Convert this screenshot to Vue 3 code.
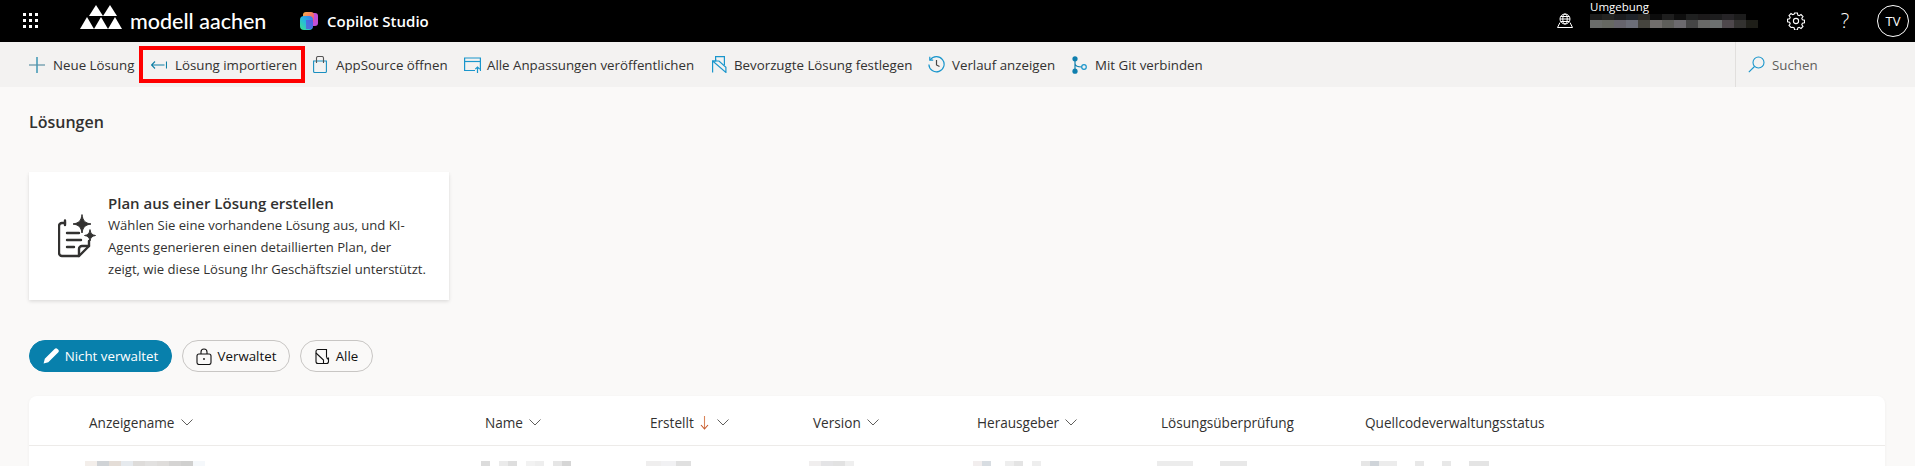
<script setup>
const pixelsTop = ['#1c1c1c', '#242422', '#1c1c1e', '#20242a', '#2a2824', '#0c0c0c', '#1e1e1e', '#0e0e0e', '#1f2020', '#1c1a1b', '#1d1d1e', '#262427', '#1c1c1c']
const pixelsBottom = ['#6a6c6a', '#666862', '#66646c', '#6c6e78', '#45443e', '#716e6c', '#5e5e5a', '#6c6a6e', '#454545', '#686866', '#6c7070', '#4e484c', '#333230', '#1e1e18']

const firstCell = ['#f3eeea', '#d0d3d6', '#e4ddd7', '#e6eaee', '#dedcda', '#e2e1e0', '#dfdddb', '#d5d4d3', '#d0d0cf', '#f5f8fb']

const columns = [
  { label: 'Anzeigename', chevron: true },
  { label: 'Name', chevron: true },
  { label: 'Erstellt', chevron: true, sorted: true },
  { label: 'Version', chevron: true },
  { label: 'Herausgeber', chevron: true },
  { label: 'Lösungsüberprüfung' },
  { label: 'Quellcodeverwaltungsstatus' }
]

const rowBlurs = [
  [[9, '#dcdcdc'], [9, '#fff'], [9, '#ebebeb'], [9, '#dedede'], [9, '#fff'], [9, '#f2f2f2'], [9, '#eeeeee'], [9, '#fff'], [9, '#e6e6e6'], [9, '#d6d6d6']],
  [[15, '#efeeee'], [15, '#f1f1f3'], [15, '#e0e0e0']],
  [[12, '#f0eeee'], [12, '#e4e4e6'], [12, '#e2e2e2'], [9, '#efefef']],
  [[9, '#f2eeee'], [9, '#d8dde2'], [14, '#fff'], [9, '#eeeeee'], [9, '#e4e4e4'], [9, '#fff'], [9, '#eeeeee']],
  [[36, '#ececec'], [27, '#fff'], [27, '#e8e8e8']],
  [[9, '#e6e6e6'], [9, '#cfd4d9'], [18, '#ececec'], [18, '#fff'], [9, '#e8e8e8'], [18, '#fff'], [9, '#e8e8e8'], [18, '#fff'], [20, '#e4e4e4']]
]
</script>

<template>
  <div class="page">
    <header class="topbar">
      <svg class="waffle" width="16" height="16" viewBox="0 0 16 16" fill="#fff">
        <rect x="0" y="0" width="3" height="3" /><rect x="6" y="0" width="3" height="3" /><rect x="12" y="0" width="3" height="3" />
        <rect x="0" y="6" width="3" height="3" /><rect x="6" y="6" width="3" height="3" /><rect x="12" y="6" width="3" height="3" />
        <rect x="0" y="12" width="3" height="3" /><rect x="6" y="12" width="3" height="3" /><rect x="12" y="12" width="3" height="3" />
      </svg>
      <svg class="logo-mark" width="43" height="25" viewBox="0 0 43 25" fill="#fff">
        <polygon points="16,0 23,11 9,11" /><polygon points="30,0 37,11 23,11" />
        <polygon points="7,12 14,24 0,24" /><polygon points="21,12 28,24 14,24" /><polygon points="35,12 42,24 28,24" />
      </svg>
      <span class="logo-text">modell aachen</span>
      <svg class="copilot" width="18" height="18" viewBox="0 0 18 18">
        <defs>
          <linearGradient id="cp-a" x1="0" y1="1" x2="1" y2="0">
            <stop offset="0" stop-color="#3fe08a" />
            <stop offset="0.5" stop-color="#25b8e0" />
            <stop offset="1" stop-color="#3a6ff0" />
          </linearGradient>
          <linearGradient id="cp-b" x1="0" y1="0" x2="1" y2="1">
            <stop offset="0" stop-color="#f7b040" />
            <stop offset="1" stop-color="#f0408f" />
          </linearGradient>
        </defs>
        <rect x="6" y="1" width="12" height="13" rx="3" fill="#c04fd8" />
        <rect x="3" y="0" width="11" height="11" rx="3" fill="url(#cp-b)" />
        <rect x="0" y="4" width="13" height="14" rx="4" fill="url(#cp-a)" />
        <path d="M6 8h7v6a3 3 0 0 1-3 3H6z" fill="#5b4fe0" opacity="0.7" />
      </svg>
      <span class="product">Copilot Studio</span>

      <div class="topbar-right">
        <svg class="env-icon" width="18" height="16" viewBox="0 0 18 16" fill="none" stroke="#fff" stroke-width="1">
          <circle cx="9" cy="6" r="5" />
          <ellipse cx="9" cy="6" rx="2.2" ry="5" />
          <path d="M4 6h10M4.800 3.500h8.400M4.800 8.500h8.400M4 9.500 1.500 14.500h15L14 9.500" />
        </svg>
        <div class="env">
          <span class="env-label">Umgebung</span>
          <div class="pixel-row pixel-top"><i v-for="(c, i) in pixelsTop" :key="i" :style="{ background: c }"></i></div>
          <div class="pixel-row"><i v-for="(c, i) in pixelsBottom" :key="i" :style="{ background: c }"></i></div>
        </div>
        <svg class="gear" width="18" height="18" viewBox="0 0 18 18" fill="none" stroke="#fff" stroke-width="1.1">
          <circle cx="9" cy="9" r="2.6" />
          <path d="M7.600 1h2.800l.4 2.100 1.400.6 1.800-1.200 2 2-1.200 1.800.6 1.400 2.100.4v2.800l-2.100.4-.6 1.400 1.200 1.800-2 2-1.800-1.200-1.400.6-.4 2.100H7.600l-.4-2.100-1.400-.6L4 15.500l-2-2 1.200-1.800-.6-1.400L.5 9.900V7.100l2.100-.4.6-1.400L2 3.500l2-2 1.800 1.200 1.400-.6z" />
        </svg>
        <span class="help">?</span>
        <span class="avatar">TV</span>
      </div>
    </header>

    <nav class="toolbar">
      <button class="tool tool-new">
        <svg width="16" height="16" viewBox="0 0 16 16" fill="none" stroke-width="1.2">
          <path d="M8 0v16" stroke="#0f7fa5" />
          <path d="M0 8h16" stroke="#5d90a4" />
        </svg>
        Neue Lösung
      </button>
      <button class="tool tool-import">
        <svg width="16" height="16" viewBox="0 0 16 16" fill="none" stroke="#0f7fa5" stroke-width="1.1">
          <path d="M.5 8h13M15.500 4.500v7M4 4.500.5 8 4 11.500" />
        </svg>
        Lösung importieren
      </button>
      <button class="tool tool-source">
        <svg width="14" height="17" viewBox="0 0 14 17" fill="none" stroke="#1a8fc0" stroke-width="1.1">
          <path d="M.6 5h12.800v10.500a1 1 0 0 1-1 1H1.600a1 1 0 0 1-1-1z" />
          <path d="M3.500 7V2a1.500 1.500 0 0 1 1.500-1.500h4A1.500 1.500 0 0 1 10.500 2v5" stroke="#555" />
        </svg>
        AppSource öffnen
      </button>
      <button class="tool tool-publish">
        <svg width="18" height="16" viewBox="0 0 18 16" fill="none" stroke="#1a96cc" stroke-width="1.2">
          <path d="M11 13.500H.6V1h15.800v12.500H16" />
          <path d="M.6 4.500h15.800" />
          <path d="M13.500 16v-6M11.300 12.200l2.200-2.200 2.200 2.200" />
        </svg>
        Alle Anpassungen veröffentlichen
      </button>
      <button class="tool tool-pref">
        <svg width="15" height="17" viewBox="0 0 15 17" fill="none" stroke="#1a96cc" stroke-width="1.2">
          <path d="M.6 16.400V5h3V.6h8.800V9" />
          <path d="M.6 5h6.400l6.900 6.200v5.200z" />
          <path d="M3.600 5V3" />
        </svg>
        Bevorzugte Lösung festlegen
      </button>
      <button class="tool tool-history">
        <svg width="17" height="17" viewBox="0 0 17 17" fill="none" stroke="#1a96cc" stroke-width="1.2">
          <path d="M2.200 4A7.600 7.600 0 1 1 .9 8.500" />
          <path d="M1.800.8v3.400h3.400" />
          <path d="M8.500 4v5l3 1.500" stroke="#444" />
        </svg>
        Verlauf anzeigen
      </button>
      <button class="tool tool-git">
        <svg width="16" height="18" viewBox="0 0 16 18" fill="none">
          <path d="M3 2v14M3 7.500c0 2.500 3 3.500 7 3.500" stroke="#0f7fae" stroke-width="1.2" />
          <circle cx="3" cy="2.800" r="2.600" fill="#0f7fae" />
          <circle cx="3" cy="15.200" r="2.600" fill="#0f7fae" />
          <circle cx="12" cy="11" r="2.300" stroke="#1a96cc" stroke-width="1.2" fill="#f3f2f1" />
        </svg>
        Mit Git verbinden
      </button>
      <div class="search">
        <svg width="17" height="17" viewBox="0 0 17 17" fill="none" stroke="#1a96cc" stroke-width="1.1">
          <circle cx="10.500" cy="6.500" r="5.500" />
          <path d="M6.500 10.500.8 16.200" />
        </svg>
        <span>Suchen</span>
      </div>
    </nav>

    <main class="content">
      <h1 class="title">Lösungen</h1>

      <section class="card">
        <svg class="card-icon" width="38" height="44" viewBox="0 0 38 44" fill="none" stroke="#323130" stroke-width="2.400" stroke-linecap="round" stroke-linejoin="round">
          <path d="M7 9H4a3 3 0 0 0-3 3v27a3 3 0 0 0 3 3h17l10-10V27" />
          <path d="M7 6.500V11M21 42V35a3 3 0 0 1 3-3h7" />
          <path d="M9 19h12M9 26h14M9 33h7" />
          <path d="M24 1c1 6 3 8 9 9-6 1-8 3-9 9-1-6-3-8-9-9 6-1 8-3 9-9z" fill="#323130" stroke-width="1" />
          <path d="M32 16c.6 3.500 2 5 5.500 5.500-3.500.6-5 2-5.500 5.500-.6-3.500-2-5-5.500-5.500 3.500-.6 5-2 5.500-5.500z" fill="#323130" stroke-width="1" />
        </svg>
        <div class="card-body">
          <h2>Plan aus einer Lösung erstellen</h2>
          <p>Wählen Sie eine vorhandene Lösung aus, und KI-<br />Agents generieren einen detaillierten Plan, der<br />zeigt, wie diese Lösung Ihr Geschäftsziel unterstützt.</p>
        </div>
      </section>

      <div class="pills">
        <button class="pill active">
          <svg width="16" height="16" viewBox="0 0 16 16" fill="#fff">
            <path d="M11.600.9a2 2 0 0 1 2.900 0l.6.6a2 2 0 0 1 0 2.900L5.300 14.200.6 15.400l1.200-4.700z" />
          </svg>
          Nicht verwaltet
        </button>
        <button class="pill">
          <svg width="16" height="17" viewBox="0 0 16 17" fill="none" stroke="#111" stroke-width="1.100">
            <rect x="1" y="6" width="14" height="10.500" rx="2" />
            <path d="M5 6V4a3 3 0 0 1 6 0v2" />
            <circle cx="8" cy="11" r="0.900" fill="#111" stroke="none" />
          </svg>
          Verwaltet
        </button>
        <button class="pill">
          <svg width="15" height="17" viewBox="0 0 15 17" fill="none" stroke="#111" stroke-width="1.100">
            <path d="M1 3.500a2 2 0 0 1 2-2h8.500v8M1 3.500v10a2 2 0 0 0 2 2h8.500a2 2 0 0 0 2-2V9.500" />
            <path d="M1 5l7.500 7V16M11.500 9.500l2 2" />
          </svg>
          Alle
        </button>
      </div>

      <section class="table">
        <div class="row head">
          <div v-for="col in columns" :key="col.label" class="head-cell">
            <span>{{ col.label }}</span>
            <svg v-if="col.sorted" class="sort" width="9" height="14" viewBox="0 0 9 14" fill="none" stroke-width="1.100">
              <path d="M4.500 0v12" stroke="#d9855a" />
              <path d="M1 9l3.500 4L8 9" stroke="#c4572a" />
            </svg>
            <svg v-if="col.chevron" width="12" height="7" viewBox="0 0 12 7" fill="none" stroke="#605e5c">
              <path d="M.5.500 6 6l5.500-5.500" />
            </svg>
          </div>
        </div>
        <div class="row body-row">
          <div class="blur-cell">
            <i v-for="(c, i) in firstCell" :key="i" :style="{ background: c }"></i>
          </div>
          <div v-for="(cell, n) in rowBlurs" :key="n" class="blur-cell">
            <i v-for="(b, i) in cell" :key="i" :style="{ width: b[0] + 'px', background: b[1] }"></i>
          </div>
        </div>
      </section>
    </main>
  </div>
</template>

<style>
html,
body {
  margin: 0;
  background: #faf9f8;
}
</style>

<style scoped>
.page {
  height: 466px;
  overflow: hidden;
  background: #faf9f8;
  font-family: "Open Sans", "Noto Sans", sans-serif;
  font-size: 13.3px;
  color: #323130;
}

.topbar {
  display: flex;
  align-items: center;
  height: 42px;
  padding-left: 23px;
  background: #000;
  color: #fff;
}

.waffle {
  margin-right: 41px;
}

.logo-mark {
  margin-top: -8px;
  margin-right: 7px;
}

.logo-text {
  width: 170px;
  font-family: Lato, sans-serif;
  font-size: 21.5px;
  font-weight: 500;
  line-height: 42px;
}

.copilot {
  margin-right: 9px;
}

.product {
  font-size: 15px;
  font-weight: 600;
}

.topbar-right {
  display: flex;
  align-items: center;
  align-self: stretch;
  margin-left: auto;
  padding-right: 6px;
}

.env-icon {
  margin-right: 16px;
}

.env {
  width: 197px;
  align-self: flex-start;
}

.env-label {
  display: block;
  font-size: 11.5px;
  line-height: 14px;
}

.pixel-row {
  display: flex;
  height: 8px;
}

.pixel-top {
  height: 6px;
}

.pixel-row i {
  width: 12px;
}

.gear {
  margin-right: 34px;
}

.help {
  width: 12px;
  margin-right: 26px;
  font-size: 20px;
  font-weight: 300;
  line-height: 24px;
  text-align: center;
}

.avatar {
  display: grid;
  place-items: center;
  box-sizing: border-box;
  width: 32px;
  height: 32px;
  border: 1px solid #fff;
  border-radius: 50%;
  font-size: 13px;
  font-weight: 500;
}

.toolbar {
  display: flex;
  align-items: center;
  height: 45px;
  padding-left: 29px;
  background: #f3f2f1;
}

.tool {
  display: flex;
  align-items: center;
  gap: 8px;
  box-sizing: border-box;
  padding: 0;
  border: 0;
  background: none;
  font: inherit;
  color: #323130;
  white-space: nowrap;
}

.tool-new {
  width: 110px;
}

.tool-import {
  width: 166px;
  height: 37px;
  padding-left: 8px;
  border: 4px solid #f00;
}

.tool-source {
  width: 151px;
  margin-left: 8px;
  gap: 9px;
}

.tool-publish {
  width: 248px;
  gap: 5px;
}

.tool-pref {
  width: 216px;
  gap: 7px;
}

.tool-history {
  width: 144px;
  gap: 7px;
}

.tool-git {
  gap: 7px;
}

.search {
  display: flex;
  align-items: center;
  gap: 7px;
  align-self: stretch;
  margin-left: auto;
  width: 167px;
  padding-left: 12px;
  border-left: 1px solid #e1dfdd;
  color: #605e5c;
}

.content {
  padding: 0 30px 0 29px;
}

.title {
  margin: 0;
  padding-top: 24px;
  font-size: 16px;
  font-weight: 600;
  line-height: 22px;
}

.card {
  display: flex;
  align-items: center;
  gap: 12px;
  box-sizing: border-box;
  width: 420px;
  height: 128px;
  margin-top: 39px;
  padding-left: 29px;
  background: #fff;
  box-shadow: 0 1.6px 3.6px rgba(0, 0, 0, 0.13), 0 0.3px 0.9px rgba(0, 0, 0, 0.11);
}

.card-body h2 {
  margin: 0;
  font-size: 15px;
  font-weight: 600;
  line-height: 22px;
}

.card-body p {
  margin: 0;
  font-size: 13.1px;
  line-height: 22px;
  white-space: nowrap;
}

.pills {
  display: flex;
  gap: 10px;
  margin-top: 40px;
}

.pill {
  display: flex;
  align-items: center;
  justify-content: center;
  gap: 6px;
  box-sizing: border-box;
  height: 32px;
  padding: 0;
  border: 1px solid #c8c6c4;
  border-radius: 16px;
  background: none;
  font: inherit;
  color: #111;
}

.pill:nth-child(1) {
  width: 143px;
}

.pill:nth-child(2) {
  width: 108px;
}

.pill:nth-child(3) {
  width: 73px;
}

.pill.active {
  border-color: #0880ac;
  background: #0880ac;
  color: #fff;
}

.table {
  height: 100px;
  margin-top: 24px;
  border-radius: 8px 8px 0 0;
  background: #fff;
  box-shadow: 0 1.6px 3.6px rgba(0, 0, 0, 0.05);
}

.row {
  display: grid;
  grid-template-columns: 396px 165px 163px 164px 184px 204px 1fr;
  padding-left: 60px;
}

.head {
  box-sizing: content-box;
  height: 45px;
  padding-top: 4px;
  align-items: center;
  border-bottom: 1px solid #edebe9;
  font-size: 13.6px;
  font-weight: 500;
}

.head-cell {
  display: flex;
  align-items: center;
  gap: 6px;
}

.sort {
  margin-right: 2px;
}

.body-row {
  padding-top: 15px;
}

.blur-cell {
  display: flex;
  height: 6px;
  margin-left: -4px;
}

.blur-cell i {
  width: 12px;
}
</style>
